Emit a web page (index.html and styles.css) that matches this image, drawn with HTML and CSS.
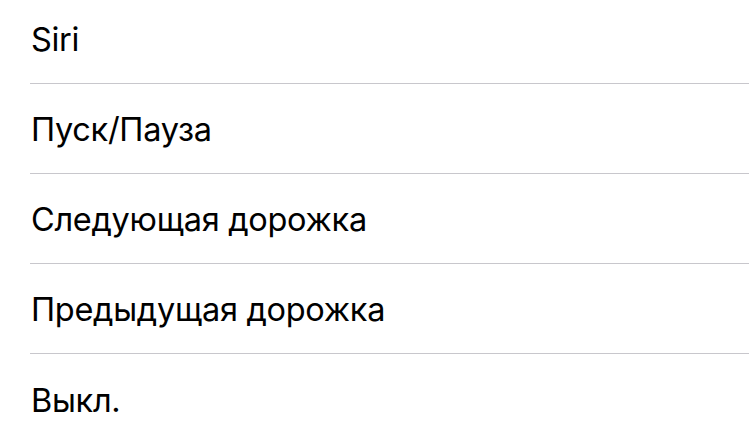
FILE: index.html
```html
<!DOCTYPE html>
<html lang="ru">
<head>
<meta charset="utf-8">
<link rel="stylesheet" href="styles.css">
</head>
<body>
<ul class="list">
  <li class="row"><span class="label">Siri</span></li>
  <li class="row"><span class="label">Пуск/Пауза</span></li>
  <li class="row"><span class="label">Следующая дорожка</span></li>
  <li class="row"><span class="label">Предыдущая дорожка</span></li>
  <li class="row"><span class="label">Выкл.</span></li>
</ul>
</body>
</html>
```
FILE: styles.css
```css
html, body {
  margin: 0;
  padding: 0;
  background: #ffffff;
  overflow: hidden;
}
.list {
  list-style: none;
  margin: -6px 0 0 0;
  padding: 0 0 0 30px;
  font-family: "Inter", "Roboto", "Liberation Sans", sans-serif;
}
.row {
  height: 90px;
  box-sizing: border-box;
  display: flex;
  align-items: center;
  padding-top: 2px;
  border-bottom: 1px solid #c8c7cc;
}
.row:last-child {
  border-bottom: none;
}
.label {
  font-size: 32.5px;
  color: #000000;
  padding-left: 1px;
  letter-spacing: -0.3px;
}
```
